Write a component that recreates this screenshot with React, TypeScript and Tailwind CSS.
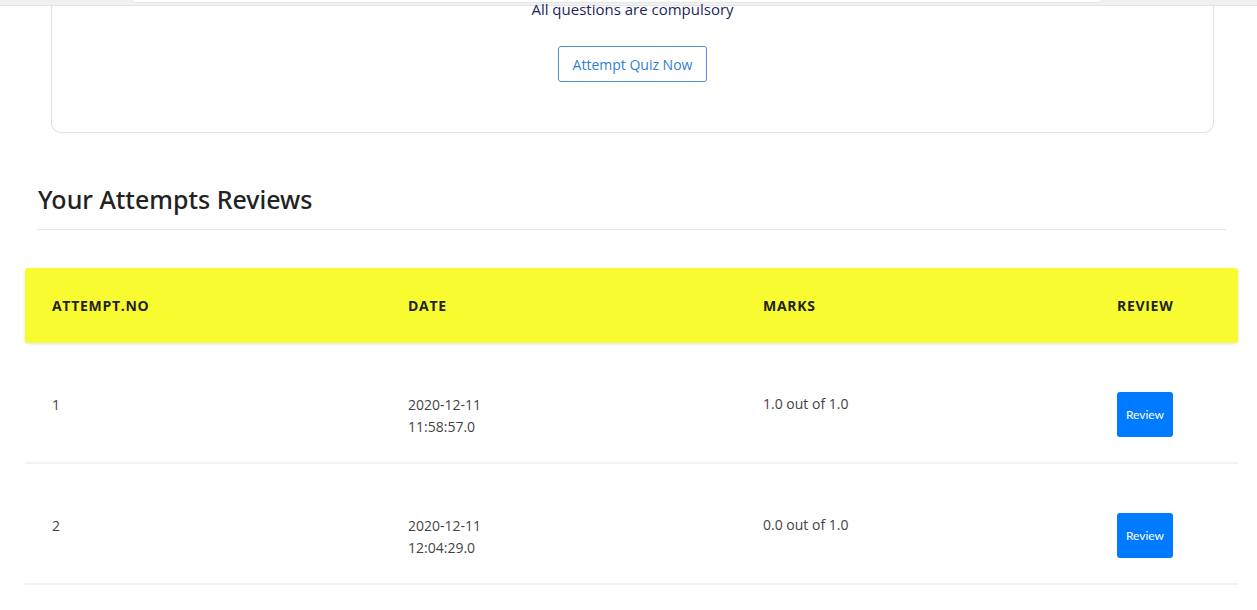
const attempts = [
  { no: 1, date: '2020-12-11', time: '11:58:57.0', marks: '1.0 out of 1.0' },
  { no: 2, date: '2020-12-11', time: '12:04:29.0', marks: '0.0 out of 1.0' },
];

export default function App() {
  return (
    <div className="min-h-screen bg-white font-['Open_Sans',sans-serif] text-[#212529] overflow-hidden">
      {/* sticky bar edge */}
      <div className="h-[6px] bg-[#f1f1f1] border-b border-[#e4e4e4]">
        <div className="ml-[133px] w-[967px] h-[3px] bg-white rounded-b-[3px] border-b border-[#e6e6e6]" />
      </div>

      {/* quiz card */}
      <div className="ml-[51px] w-[1163px] h-[127px] border border-t-0 border-[#e2e2e2] rounded-b-[10px] flex flex-col items-center">
        <p className="-mt-[8px] text-[15px] leading-[22px] text-[#231f5c]">All questions are compulsory</p>
        <button className="mt-[26px] h-[36px] w-[149px] border border-[#4a90d9] rounded-[3px] text-[14px] text-[#2f7fd6] bg-white">
          Attempt Quiz Now
        </button>
      </div>

      {/* reviews */}
      <div className="mt-[48px] ml-[37px] w-[1189px]">
        <h2 className="pl-[1px] text-[25px] leading-[36px] font-medium font-['Noto_Sans',sans-serif] text-[#222]">Your Attempts Reviews</h2>
        <div className="mt-[12px] border-t border-[#e6e6e6]" />
      </div>

      <div className="mt-[38px] ml-[25px] w-[1213px]">
        <div className="h-[75px] bg-[#f8fb2f] rounded-[3px] shadow-[0_1px_3px_rgba(0,0,0,0.12)] grid grid-cols-[356px_355px_354px_1fr] items-center text-[14px] font-bold tracking-[0.7px] text-[#222]">
          <div className="pl-[27px]">ATTEMPT.NO</div>
          <div className="pl-[27px]">DATE</div>
          <div className="pl-[27px]">MARKS</div>
          <div className="pl-[27px]">REVIEW</div>
        </div>
        {attempts.map((a) => (
          <div
            key={a.no}
            className="h-[121px] border-b-2 border-[#f2f2f2] grid grid-cols-[356px_355px_354px_1fr] items-start pt-[49px] text-[14px] leading-[22px] text-[#444]"
          >
            <div className="pl-[27px] pt-[2px]">{a.no}</div>
            <div className="pl-[27px] pt-[2px]">
              <div>{a.date}</div>
              <div>{a.time}</div>
            </div>
            <div className="pl-[27px] pt-[1px]">{a.marks}</div>
            <div className="pl-[27px]">
              <button className="h-[45px] w-[56px] bg-[#007bff] rounded-[3px] text-white text-[12px] font-['Lato',sans-serif]">
                Review
              </button>
            </div>
          </div>
        ))}
      </div>
    </div>
  );
}
